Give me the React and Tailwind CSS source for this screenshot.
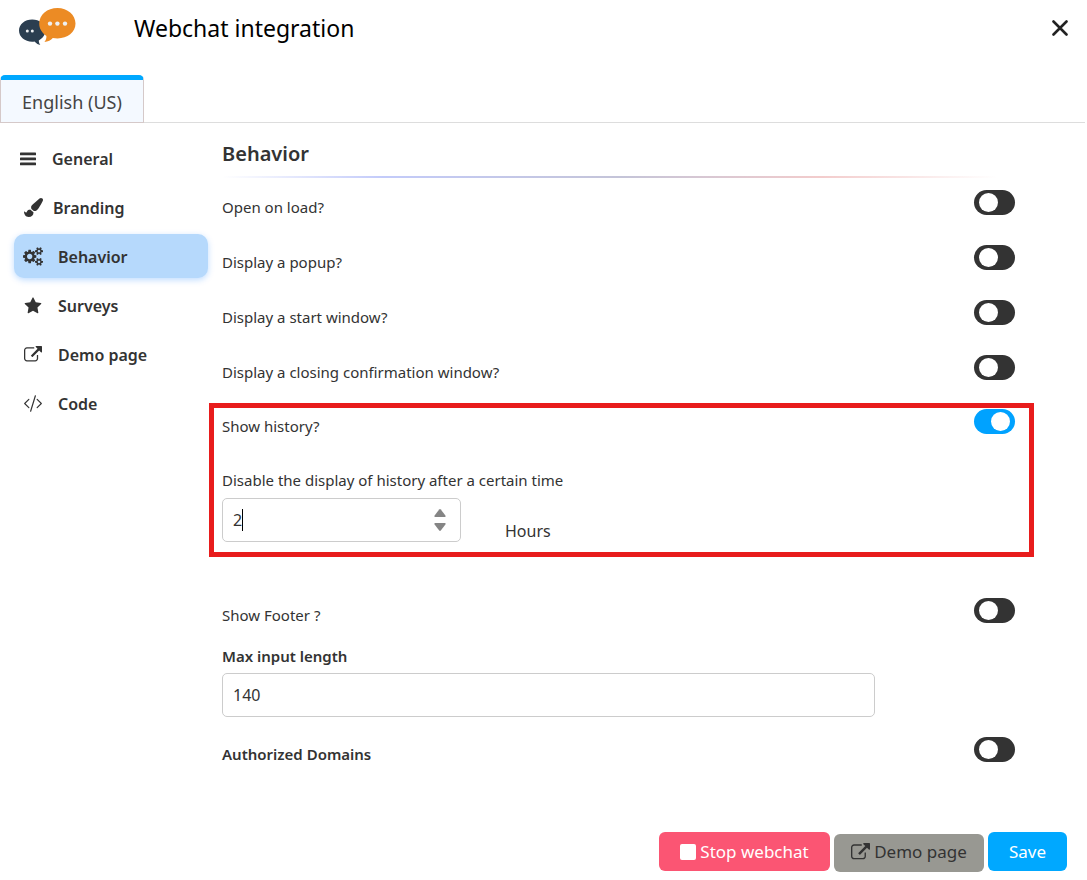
import { useState } from "react";
import { FaPaintBrush } from "react-icons/fa";
import { BsCodeSlash } from "react-icons/bs";

function Logo() {
  return (
    <svg viewBox="0 0 57 38" className="h-[38px] w-[57px]" role="img" aria-label="Webchat">
      <path
        d="M13.2 11.5C5.8 11.5 0 16.300 0 22.600c0 6.400 5.800 11.200 13.200 11.200.8 0 1.600-.1 2.300-.2 1.800 2 3.800 3.200 5.800 3.400-.9-1.100-1.500-2.700-1.500-4.500 4-2 6.500-5.600 6.500-9.900 0-6.300-5.700-11.100-13.100-11.100z"
        fill="#2b3e50"
      />
      <path
        d="M38.500 0C28.200 0 20.200 6.800 20.200 15.600c0 5.100 2.800 9.600 7.200 12.400.2 2.200-.6 4.400-2 6 3.600-.4 6.600-1.900 8.400-4.100 1.500.3 3.100.5 4.700.5 10 0 18-6.100 18-14.800S48.500 0 38.500 0z"
        fill="#ec8b24"
      />
      <g fill="#eef0f2">
        <circle cx="31" cy="15.600" r="2.200" />
        <circle cx="38.400" cy="15.600" r="2.200" />
        <circle cx="46" cy="15.600" r="2.200" />
        <circle cx="8.300" cy="23" r="1.500" />
        <circle cx="13.300" cy="23" r="1.500" />
      </g>
    </svg>
  );
}

function BarsIcon({ className }) {
  return (
    <svg viewBox="0 0 16 14" fill="currentColor" className={className} aria-hidden="true">
      <rect x="0" y="0.500" width="16" height="2.800" rx="0.600" />
      <rect x="0" y="5.500" width="16" height="2.800" rx="0.600" />
      <rect x="0" y="10.500" width="16" height="2.800" rx="0.600" />
    </svg>
  );
}

function CogsIcon({ className }) {
  return (
    <svg viewBox="0 0 1920 1792" fill="currentColor" className={className} aria-hidden="true">
      <path d="M896 896q0-106-75-181t-181-75-181 75-75 181 75 181 181 75 181-75 75-181zm768 512q0-52-38-90t-90-38-90 38-38 90q0 53 37.500 90.500t90.500 37.500 90.500-37.500 37.500-90.500zm0-1024q0-52-38-90t-90-38-90 38-38 90q0 53 37.500 90.500t90.500 37.500 90.500-37.500 37.500-90.500zm-384 421v185q0 10-7 19.500t-16 10.500l-155 24q-11 35-32 76 34 48 90 115 7 11 7 20 0 12-7 19-23 30-82.500 89.500t-78.500 59.500q-11 0-21-7l-115-90q-37 19-77 31-11 108-23 155-7 24-30 24h-186q-11 0-20-7.500t-10-17.500l-23-153q-34-10-75-31l-118 89q-7 7-20 7-11 0-21-8-144-133-144-160 0-9 7-19 10-14 41-53t47-61q-23-44-35-82l-152-24q-10-1-17-9.500t-7-19.500v-185q0-10 7-19.500t16-10.500l155-24q11-35 32-76-34-48-90-115-7-11-7-20 0-12 7-20 22-30 82-89t79-59q11 0 21 7l115 90q34-18 77-32 11-108 23-154 7-24 30-24h186q11 0 20 7.500t10 17.500l23 153q34 10 75 31l118-89q8-7 20-7 11 0 21 8 144 133 144 160 0 8-7 19-12 16-42 54t-45 60q23 48 34 82l152 23q10 2 17 10.500t7 19.500zm640 533v140q0 16-149 31-12 27-30 52 51 113 51 138 0 4-4 7-122 71-124 71-8 0-46-47t-52-68q-20 2-30 2t-30-2q-14 21-52 68t-46 47q-2 0-124-71-4-3-4-7 0-25 51-138-18-25-30-52-149-15-149-31v-140q0-16 149-31 13-29 30-52-51-113-51-138 0-4 4-7 4-2 35-20t59-34 30-16q8 0 46 46.500t52 67.500q20-2 30-2t30 2q51-71 92-112l6-2q4 0 124 70 4 3 4 7 0 25-51 138 17 23 30 52 149 15 149 31zm0-1024v140q0 16-149 31-12 27-30 52 51 113 51 138 0 4-4 7-122 71-124 71-8 0-46-47t-52-68q-20 2-30 2t-30-2q-14 21-52 68t-46 47q-2 0-124-71-4-3-4-7 0-25 51-138-18-25-30-52-149-15-149-31v-140q0-16 149-31 13-29 30-52-51-113-51-138 0-4 4-7 4-2 35-20t59-34 30-16q8 0 46 46.500t52 67.500q20-2 30-2t30 2q51-71 92-112l6-2q4 0 124 70 4 3 4 7 0 25-51 138 17 23 30 52 149 15 149 31z" />
    </svg>
  );
}

function StarIcon({ className }) {
  return (
    <svg viewBox="0 0 1792 1792" fill="currentColor" className={className} aria-hidden="true">
      <path d="M1728 647q0 22-26 48l-363 354 86 500q1 7 1 20 0 21-10.500 35.500t-30.500 14.500q-19 0-40-12l-449-236-449 236q-22 12-40 12-21 0-31.500-14.500t-10.500-35.500q0-6 2-20l86-500-364-354q-25-27-25-48 0-37 56-46l502-73 225-455q19-41 49-41t49 41l225 455 502 73q56 9 56 46z" />
    </svg>
  );
}

function ExternalLinkIcon({ className }) {
  return (
    <svg viewBox="0 0 1792 1792" fill="currentColor" className={className} aria-hidden="true">
      <path d="M1408 928v320q0 119-84.500 203.500t-203.500 84.500h-832q-119 0-203.500-84.500t-84.500-203.500v-832q0-119 84.500-203.500t203.500-84.500h704q14 0 23 9t9 23v64q0 14-9 23t-23 9h-704q-66 0-113 47t-47 113v832q0 66 47 113t113 47h832q66 0 113-47t47-113v-320q0-14 9-23t23-9h64q14 0 23 9t9 23zm384-864v512q0 26-19 45t-45 19-45-19l-176-176-652 652q-10 10-23 10t-23-10l-114-114q-10-10-10-23t10-23l652-652-176-176q-19-19-19-45t19-45 45-19h512q26 0 45 19t19 45z" />
    </svg>
  );
}

const NAV = [
  { label: "General", Icon: BarsIcon, link: "pl-1.5 gap-4", icon: "h-3.5 w-4" },
  { label: "Branding", Icon: FaPaintBrush, link: "pl-2.5 gap-2.5", icon: "size-[19px]" },
  { label: "Behavior", Icon: CogsIcon, link: "pl-[9px] gap-[15px]", icon: "h-[19px] w-5", active: true },
  { label: "Surveys", Icon: StarIcon, link: "pl-[9px] gap-[15px]", icon: "h-[18px] w-5" },
  { label: "Demo page", Icon: ExternalLinkIcon, link: "pl-[9px] gap-[15px]", icon: "h-[18px] w-5" },
  { label: "Code", Icon: BsCodeSlash, link: "pl-[9px] gap-[15px]", icon: "h-[19px] w-5" },
];

function ToggleRow({ id, label, on = false, bold = false, className = "" }) {
  const [checked, setChecked] = useState(on);
  return (
    <div className={`flex items-start justify-between ${className}`}>
      <label htmlFor={id} className={`pt-[5px] text-[15px] leading-6 ${bold ? "font-semibold" : ""}`}>
        {label}
      </label>
      <input
        id={id}
        type="checkbox"
        role="switch"
        checked={checked}
        onChange={(e) => setChecked(e.target.checked)}
        className="h-[25px] w-[41px] shrink-0 cursor-pointer appearance-none rounded-full bg-[#333333] px-[5px] py-[3px] before:block before:size-[19px] before:rounded-full before:bg-white checked:bg-[#00a2ff] checked:pr-0 checked:pl-[17px]"
      />
    </div>
  );
}

export default function App() {
  const [hours, setHours] = useState("2");
  const [maxLength, setMaxLength] = useState("140");
  const step = (n) => setHours((h) => String(Math.max(0, Number(h) + n)));

  return (
    <div className="flex min-h-screen flex-col bg-white font-['Noto_Sans','Open_Sans',sans-serif] text-[#333333]">
      <header className="flex h-[75px] items-start pt-2 pr-[19px] pl-[19px]">
        <Logo />
        <h1 className="ml-[58px] flex-1 text-[23px] leading-10 text-black">Webchat integration</h1>
        <button type="button" aria-label="Close" className="mt-3 text-[#222222]">
          <svg viewBox="0 0 16 16" className="size-4" fill="none" stroke="currentColor" strokeWidth="2.600" strokeLinecap="round">
            <path d="M1.500 1.500l13 13M14.500 1.500l-13 13" />
          </svg>
        </button>
      </header>

      <div className="mr-0.5 flex border-b border-[#dddddd]">
        <button
          type="button"
          className="-mb-px h-12 w-36 rounded-t-[5px] border border-t-5 border-[#d5c9c9] border-t-[#00a8ff] bg-[#f4f9ff] pt-0.5 text-[18px] text-[#444444]"
        >
          English (US)
        </button>
      </div>

      <div className="flex flex-1">
        <nav className="flex w-[209px] shrink-0 flex-col gap-[5px] pt-[13px] pr-px pl-3.5">
          {NAV.map(({ label, Icon, link, icon, active }) => (
            <a
              key={label}
              href="#"
              aria-current={active ? "page" : undefined}
              className={`flex h-11 items-center rounded-[10px] pt-px text-[16px] font-semibold ${link} ${
                active ? "bg-[#b6d9fc] shadow-[0_2px_6px_rgba(0,120,255,0.25)]" : ""
              }`}
            >
              <Icon className={icon} />
              {label}
            </a>
          ))}
        </nav>

        <main className="mr-[53px] min-w-0 flex-1 pt-[15px]">
          <h2 className="pl-[13px] text-[20px] leading-8 font-semibold">Behavior</h2>
          <div className="mx-[13px] mt-1.5 h-0.5 bg-[linear-gradient(90deg,transparent,#c3cbfa_20%,#c4c4d8_50%,#f3cccc_75%,transparent_97%)]" />

          <div className="mt-3 pr-[19px] pl-[13px]">
            <ToggleRow id="open-on-load" label="Open on load?" className="h-[55px]" />
            <ToggleRow id="popup" label="Display a popup?" className="h-[55px]" />
            <ToggleRow id="start-window" label="Display a start window?" className="h-[55px]" />
            <ToggleRow id="closing" label="Display a closing confirmation window?" className="h-[55px]" />
          </div>

          <section className="-mt-[7px] border-5 border-[#e81c1c] pt-px pr-3.5 pb-[9px] pl-2">
            <ToggleRow id="history" label="Show history?" on className="h-[59px]" />
            <label htmlFor="hours" className="block text-[15px] leading-6">
              Disable the display of history after a certain time
            </label>
            <div className="mt-1.5 flex items-start">
              <div className="relative flex h-11 w-[239px] items-center rounded-[5px] border border-[#cccccc] pr-3">
                <input
                  id="hours"
                  type="number"
                  value={hours}
                  onChange={(e) => setHours(e.target.value)}
                  className="h-full min-w-0 flex-1 pl-2.5 text-[16px] caret-transparent outline-none [appearance:textfield] [&::-webkit-inner-spin-button]:appearance-none"
                />
                <span
                  aria-hidden="true"
                  className="pointer-events-none absolute inset-y-0 left-2.5 flex items-center text-[16px]"
                >
                  <span className="invisible">{hours}</span>
                  <span className="h-[22px] w-px bg-black" />
                </span>
                <span className="flex h-[22px] w-4 flex-col justify-between">
                  <button type="button" aria-label="Increase" onClick={() => step(1)}>
                    <svg viewBox="0 0 12 8" className="mx-auto h-2 w-3" fill="#858585">
                      <path d="M5.200.5Q6-.4 6.800.5l4.600 6q.8 1.500-.7 1.500H1.300q-1.500 0-.7-1.500z" />
                    </svg>
                  </button>
                  <button type="button" aria-label="Decrease" onClick={() => step(-1)}>
                    <svg viewBox="0 0 12 8" className="mx-auto h-2 w-3" fill="#858585">
                      <path d="M5.200 7.500q.8.900 1.600 0l4.600-6Q12.200 0 10.700 0H1.300Q-.2 0 .6 1.500z" />
                    </svg>
                  </button>
                </span>
              </div>
              <span className="mt-[21px] ml-11 text-[16px] leading-6">Hours</span>
            </div>
          </section>

          <div className="mt-[41px] pr-[19px] pl-[13px]">
            <ToggleRow id="footer" label="Show Footer ?" className="h-[46px]" />
            <label htmlFor="max-length" className="block text-[15px] leading-6 font-semibold">
              Max input length
            </label>
            <div className="mt-[5px] pr-[140px]">
              <input
                id="max-length"
                type="text"
                value={maxLength}
                onChange={(e) => setMaxLength(e.target.value)}
                className="h-11 w-full rounded-[5px] border border-[#cccccc] px-2.5 text-[16px] outline-none"
              />
            </div>
            <ToggleRow id="domains" label="Authorized Domains" bold className="mt-5" />
          </div>
        </main>
      </div>

      <footer className="flex items-start justify-end gap-1 pr-5 pb-2 text-[17px]">
        <button type="button" className="flex h-[39px] w-[171px] items-center justify-center gap-1 rounded-md bg-[#fb5573] text-white">
          <span className="size-4 rounded-[2px] bg-white" />
          Stop webchat
        </button>
        <button type="button" className="mt-0.5 flex h-[38px] w-[150px] items-center justify-center gap-1 rounded-md bg-[#989892] pb-0.5 text-[#333333]">
          <ExternalLinkIcon className="size-[19px]" />
          Demo page
        </button>
        <button type="button" className="h-[39px] w-[79px] rounded-md bg-[#00a8ff] text-white">
          Save
        </button>
      </footer>
    </div>
  );
}
